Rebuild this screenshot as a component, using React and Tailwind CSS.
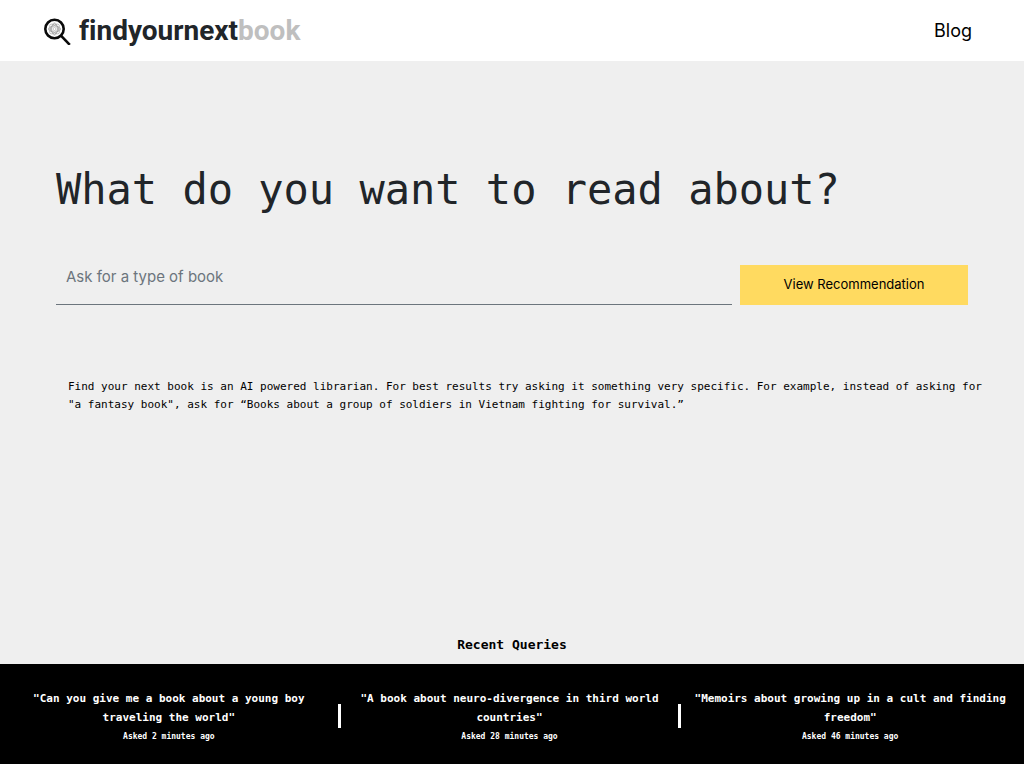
const queries = [
  { text: '"Can you give me a book about a young boy traveling the world"', ago: "Asked 2 minutes ago" },
  { text: '"A book about neuro-divergence in third world countries"', ago: "Asked 28 minutes ago" },
  { text: '"Memoirs about growing up in a cult and finding freedom"', ago: "Asked 46 minutes ago" },
];

const petals = [0, 45, 90, 135];

function Logo() {
  return (
    <svg viewBox="0 0 28 28" className="h-7 w-7" fill="none" aria-hidden="true">
      <circle cx="10.5" cy="12" r="9.2" stroke="#0a0a0a" strokeWidth="2.6" />
      <g stroke="#8a8a8a" strokeWidth="0.5">
        {petals.map((angle) => (
          <ellipse key={angle} cx="10.5" cy="12" rx="6.2" ry="3" transform={`rotate(${angle} 10.5 12)`} />
        ))}
        <path d="M10.5 6.5 16 12 10.5 17.5 5 12Z" />
        <circle cx="10.5" cy="12" r="1.5" fill="#fff" />
      </g>
      <path d="M17.2 18.8 25.8 27.8" stroke="#0a0a0a" strokeWidth="2.6" />
    </svg>
  );
}

export default function App() {
  return (
    <div className="flex min-h-screen flex-col bg-[#efefef] font-['Inter',sans-serif] text-black">
      <header className="flex h-[61px] items-center justify-between bg-white pr-[52px] pl-11">
        <a href="#" className="flex items-center gap-[7px] font-['Roboto',sans-serif] text-[28px] leading-8 font-bold text-[#212529] [font-variant-ligatures:none]">
          <Logo />
          <span>findyournext<span className="text-[#bfbfbf]">book</span></span>
        </a>
        <a href="#blog" className="text-lg">Blog</a>
      </header>
      <main className="flex-1 px-14 pt-[101px]">
        <h1 className="font-['DejaVu_Sans_Mono',monospace] text-[42px] leading-[56px] text-[#212529]">What do you want to read about?</h1>
        <form className="mt-[47px] flex gap-2" onSubmit={(e) => e.preventDefault()}>
          <input aria-label="Ask for a type of book" placeholder="Ask for a type of book" className="h-10 min-w-0 flex-1 border-b border-[#6c757d] px-[10px] pb-4 text-[15px] outline-none placeholder:text-[#6c757d]" />
          <button className="h-10 w-1/4 bg-[#ffda60] text-[13px]">View Recommendation</button>
        </form>
        <p className="mt-[73px] -mr-4 pl-3 font-['DejaVu_Sans_Mono',monospace] text-[11px] leading-[18px]">
          Find your next book is an AI powered librarian. For best results try asking it something very specific. For example, instead of asking for "a fantasy book", ask for “Books about a group of soldiers in Vietnam fighting for survival.”
        </p>
      </main>
      <h2 className="mb-[9px] text-center font-['DejaVu_Sans_Mono',monospace] text-[13px] leading-5 font-bold">Recent Queries</h2>
      <footer className="grid grid-cols-3 bg-black pt-[25px] pr-0.5 pb-[17px] font-['DejaVu_Sans_Mono',monospace] text-white">
        {queries.map((q) => (
          <div key={q.ago} className="group flex items-start">
            <div className="flex-1 px-3 text-center">
              <p className="text-[11px] leading-[19px] font-bold">{q.text}</p>
              <p className="text-[8px] leading-5 font-bold">{q.ago}</p>
            </div>
            <span className="mt-[15px] h-6 w-[3px] bg-white group-last:invisible" />
          </div>
        ))}
      </footer>
    </div>
  );
}
